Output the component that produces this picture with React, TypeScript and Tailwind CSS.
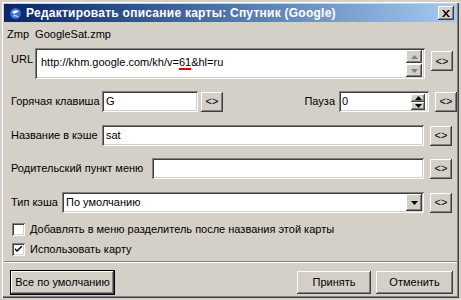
import React from 'react';

const sunken =
  'bg-white shadow-[inset_1px_1px_0_#808080,inset_-1px_-1px_0_#ffffff,inset_2px_2px_0_#404040,inset_-2px_-2px_0_#d4d0c8]';
const raised =
  'bg-[#d4d0c8] shadow-[inset_-1px_-1px_0_#404040,inset_1px_1px_0_#ffffff,inset_-2px_-2px_0_#808080,inset_2px_2px_0_#d4d0c8]';

function SwapBtn({ className = '' }: { className?: string }) {
  return (
    <div
      className={`${raised} w-[22px] h-[20px] flex items-center justify-center text-[11px] leading-none ${className}`}
    >
      &lt;&gt;
    </div>
  );
}

function Edit({
  value = '',
  className = '',
}: {
  value?: string;
  className?: string;
}) {
  return (
    <div className={`${sunken} h-[21px] flex items-center pl-[4px] ${className}`}>
      {value}
    </div>
  );
}

function Arrow({ down, grey }: { down?: boolean; grey?: boolean }) {
  return (
    <svg width="7" height="4" viewBox="0 0 7 4">
      <polygon
        points={down ? '0,0 7,0 3.5,4' : '0,4 7,4 3.5,0'}
        fill={grey ? '#808080' : '#000'}
      />
    </svg>
  );
}

function CheckBox({ checked, label }: { checked?: boolean; label: string }) {
  return (
    <div className="flex items-center h-[13px] pl-[8px]">
      <div className={`${sunken} w-[13px] h-[13px] flex items-center justify-center`}>
        {checked && (
          <svg width="7" height="7" viewBox="0 0 7 7">
            <path d="M0 2 L0 4 L2 6 L7 1 L7 -1 L2 4 Z" fill="#000" />
          </svg>
        )}
      </div>
      <span className="ml-[5px]">{label}</span>
    </div>
  );
}

export default function App() {
  return (
    <div className="w-[461px] h-[300px] bg-[#d4d0c8] p-[2px] font-['Liberation_Sans',sans-serif] text-[11px] text-black">
      <div className="w-full h-full p-[2px] shadow-[inset_1px_1px_0_#ffffff,inset_-1px_-1px_0_#404040,inset_-2px_-2px_0_#808080] flex flex-col">
        {/* title bar */}
        <div className="h-[18px] flex items-center bg-gradient-to-r from-[#0a246a] to-[#a6caf0] pl-[5px] pr-[3px]">
          <svg width="13" height="13" viewBox="0 0 13 13">
            <circle cx="6.5" cy="6.5" r="5.5" fill="#3a6fd0" />
            <path d="M3 5 Q6 2 10 4 Q8 6 5 7 Z" fill="#ffffff" />
            <path d="M4 9 Q7 8 9 10" stroke="#cfe2ff" strokeWidth="1.2" fill="none" />
          </svg>
          <span className="ml-[4px] text-white font-bold text-[12px] tracking-[0.25px] whitespace-nowrap">
            Редактировать описание карты: Спутник (Google)
          </span>
          <div className="flex-1" />
          <div className={`${raised} w-[16px] h-[14px] flex items-center justify-center`}>
            <svg width="8" height="7" viewBox="0 0 8 7">
              <path d="M0 0 L2 0 L4 2.5 L6 0 L8 0 L5 3.5 L8 7 L6 7 L4 4.5 L2 7 L0 7 L3 3.5 Z" fill="#000" />
            </svg>
          </div>
        </div>

        {/* zmp */}
        <div className="mt-[5px] pl-[3px] h-[14px] flex items-center whitespace-pre">
          Zmp  GoogleSat.zmp
        </div>

        {/* URL */}
        <div className="mt-[7px] pl-[7px] flex items-start">
          <div className="w-[24px] pt-[3px]">URL</div>
          <div className={`${sunken} w-[390px] h-[31px] flex pl-[6px] pt-[6px] pr-[3px]`}>
            <div className="flex-1">
              http://khm.google.com/kh/v=
              <span className="underline decoration-[#e00000] decoration-2 underline-offset-2">61</span>
              &amp;hl=ru
            </div>
            <div className="w-[16px] flex flex-col -mt-[4px]">
              <div className={`${raised} h-[13px] flex items-center justify-center`}>
                <Arrow grey />
              </div>
              <div className={`${raised} h-[13px] mt-[1px] flex items-center justify-center`}>
                <Arrow down grey />
              </div>
            </div>
          </div>
          <SwapBtn className="ml-[6px] mt-[3px] h-[18px]" />
        </div>

        {/* hotkey + pause */}
        <div className="mt-[12px] pl-[7px] flex items-center">
          <div className="w-[91px]">Горячая клавиша</div>
          <Edit value="G" className="w-[96px]" />
          <SwapBtn className="ml-[3px] h-[18px]" />
          <div className="flex-1" />
          <div>Пауза</div>
          <div className={`${sunken} ml-[4px] w-[90px] h-[21px] flex items-center pl-[3px] pr-[4px]`}>
            <div className="flex-1">0</div>
            <div className="w-[14px] h-[16px] flex flex-col">
              <div className={`${raised} h-[8px] flex items-center justify-center`}>
                <Arrow />
              </div>
              <div className={`${raised} h-[8px] flex items-center justify-center`}>
                <Arrow down />
              </div>
            </div>
          </div>
          <SwapBtn className="ml-[6px]" />
        </div>

        {/* cache name */}
        <div className="mt-[13px] pl-[7px] flex items-center">
          <div className="w-[91px]">Название в кэше</div>
          <Edit value="sat" className="w-[322px]" />
          <SwapBtn className="ml-[6px]" />
        </div>

        {/* parent menu */}
        <div className="mt-[12px] pl-[7px] flex items-center">
          <div className="w-[141px]">Родительский пункт меню</div>
          <Edit className="w-[272px]" />
          <SwapBtn className="ml-[6px]" />
        </div>

        {/* cache type */}
        <div className="mt-[13px] pl-[7px] flex items-center">
          <div className="w-[51px]">Тип кэша</div>
          <div className={`${sunken} w-[362px] h-[21px] flex items-center pl-[4px] pr-[2px]`}>
            <div className="flex-1">По умолчанию</div>
            <div className={`${raised} w-[16px] h-[17px] flex items-center justify-center`}>
              <Arrow down />
            </div>
          </div>
          <SwapBtn className="ml-[6px]" />
        </div>

        <div className="mt-[10px]">
          <CheckBox label="Добавлять в меню разделитель после названия этой карты" />
        </div>
        <div className="mt-[7px]">
          <CheckBox checked label="Использовать карту" />
        </div>

        {/* separator */}
        <div className="mt-[5px] h-[2px] border-t border-t-[#808080] border-b border-b-white" />

        {/* buttons */}
        <div className="mt-[7px] pl-[6px] pr-[4px] h-[25px] flex items-center">
          <div className="border border-black">
            <div className={`${raised} w-[103px] h-[23px] flex items-center justify-center`}>
              Все по умолчанию
            </div>
          </div>
          <div className="flex-1" />
          <div className={`${raised} w-[74px] h-[23px] flex items-center justify-center`}>
            Принять
          </div>
          <div className={`${raised} ml-[5px] w-[77px] h-[23px] flex items-center justify-center`}>
            Отменить
          </div>
        </div>
      </div>
    </div>
  );
}
